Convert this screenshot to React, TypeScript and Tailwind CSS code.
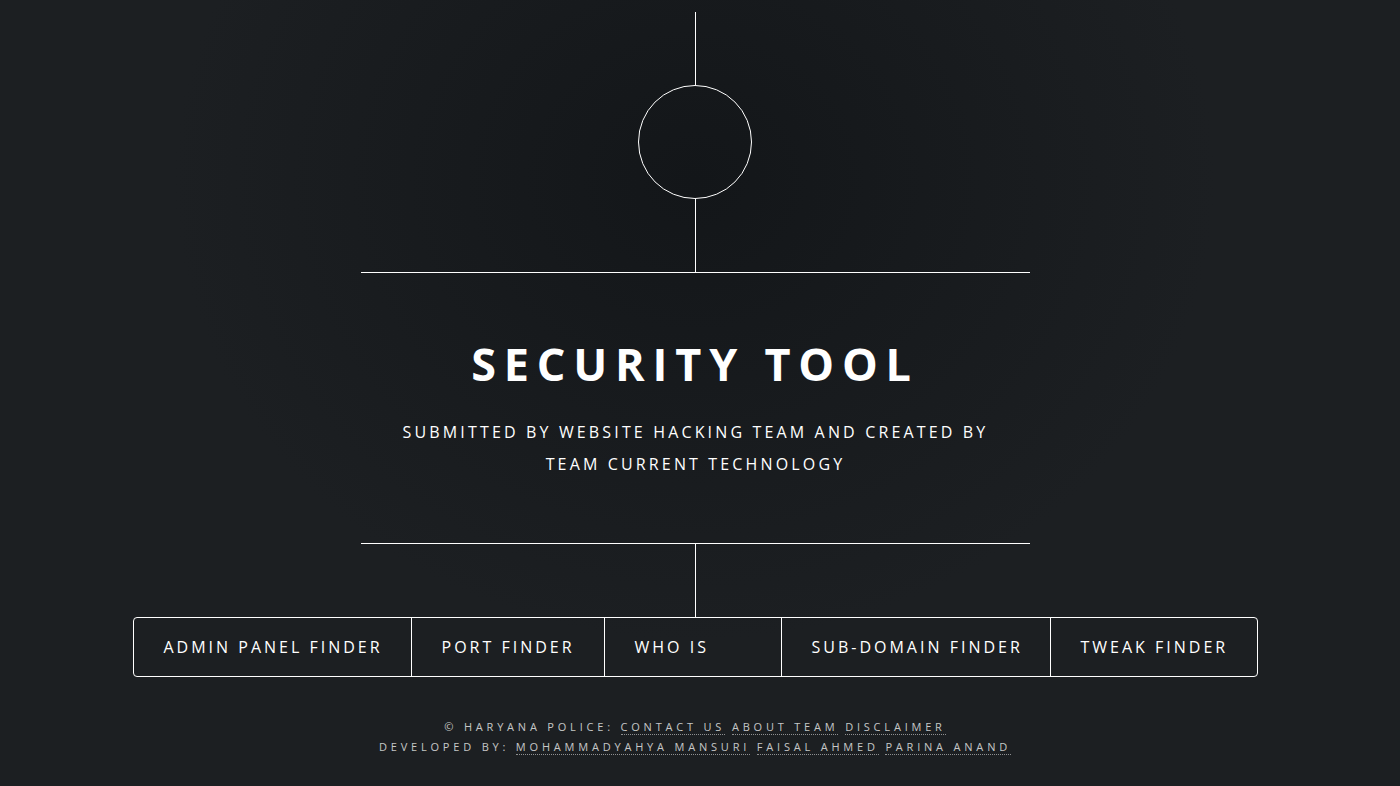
import React from "react";

const navItems = [
  { label: "Admin Panel Finder", w: "w-[277px]" },
  { label: "Port Finder", w: "w-[193px]" },
  { label: "Who is", w: "w-[177px]" },
  { label: "Sub-Domain Finder", w: "w-[269px]" },
  { label: "Tweak Finder", w: "w-[207px]" },
];

function FLink({ children }: { children: React.ReactNode }) {
  return <span className="border-b border-dotted border-white/50">{children}</span>;
}

export default function App() {
  return (
    <div
      className="min-h-screen w-full overflow-hidden bg-[#1b1f22] bg-[radial-gradient(ellipse_520px_460px_at_695px_180px,#131619_0%,#181b1e_55%,#1c1f22_100%)] text-white"
      style={{ fontFamily: '"Open Sans", "Noto Sans", sans-serif' }}
    >
      <div className="flex w-[1390px] flex-col items-center">
        <div className="mt-[12px] h-[73px] w-px bg-white" />
        <div className="h-[114px] w-[114px] rounded-full border border-white" />
        <div className="h-[73px] w-px bg-white" />
        <div className="flex h-[272px] w-[669px] flex-col items-center border-y border-white pt-[62px] text-center">
          <h1 className="text-[45px] font-bold uppercase leading-[1.3] tracking-[7.8px]">
            Security Tool
          </h1>
          <p className="mt-[22px] pl-[1px] text-[16px] font-medium uppercase leading-[32px] tracking-[3.15px]">
            Submitted by website hacking team and created by
            <br />
            team current technology
          </p>
        </div>
        <div className="h-[73px] w-px bg-white" />
        <ul className="flex h-[60px] rounded-[4px] border border-white">
          {navItems.map((it, i) => (
            <li
              key={it.label}
              className={`${it.w} ${i === 0 ? "" : "border-l border-white"} flex items-center pl-[30px] text-[16px] font-medium uppercase tracking-[3px]`}
            >
              {it.label}
            </li>
          ))}
        </ul>
        <footer className="mt-[40px] text-center text-[11px] font-medium uppercase leading-[20px] tracking-[3.8px] text-white/75">
          <p>
            © Haryana Police: <FLink>Contact us</FLink> <FLink>About team</FLink>{" "}
            <FLink>Disclaimer</FLink>
          </p>
          <p>
            Developed by: <FLink>MohammadYahya Mansuri</FLink> <FLink>Faisal Ahmed</FLink>{" "}
            <FLink>Parina Anand</FLink>
          </p>
        </footer>
      </div>
    </div>
  );
}
